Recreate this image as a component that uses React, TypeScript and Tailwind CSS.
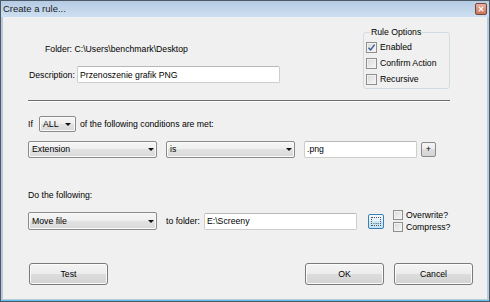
import React from 'react';

const Check: React.FC<{ checked?: boolean; size?: string }> = ({ checked, size = 'h-[11px] w-[11px]' }) => (
  <span
    className={`flex shrink-0 items-center justify-center border border-[#8e8f8f] bg-[linear-gradient(135deg,#d9d9d9,#f7f7f7)] shadow-[inset_0_0_0_1px_#f2f2f2] ${size}`}
  >
    {checked && (
      <svg width="9" height="9" viewBox="0 0 9 9">
        <path d="M1.5 4.8 L3.6 7 L7.6 1.6" fill="none" stroke="#3d5a98" strokeWidth="1.4" />
      </svg>
    )}
  </span>
);

const Combo: React.FC<{ label: string; className: string }> = ({ label, className }) => (
  <div
    className={`flex items-center justify-between rounded-[2px] border border-[#8a8a8a] bg-[linear-gradient(#f6f6f6_0%,#eeeeee_50%,#e2e2e2_50%,#d9d9d9_100%)] pl-[3px] pr-[2px] shadow-[inset_0_0_0_1px_#fafafa] ${className}`}
  >
    <span>{label}</span>
    <svg width="6" height="3" viewBox="0 0 6 3">
      <path d="M0 0h6L3 3z" fill="#111" />
    </svg>
  </div>
);

const Field: React.FC<{ value: string; className: string }> = ({ value, className }) => (
  <div
    className={`flex items-center rounded-[2px] border border-[#cdcdcd] border-t-[#b5b7bd] bg-white pl-[2px] ${className}`}
  >
    {value}
  </div>
);

const Button: React.FC<{ label: string }> = ({ label }) => (
  <div className="flex h-[22px] w-[79px] items-center justify-center rounded-[3px] border border-[#7a7a7a] bg-[linear-gradient(#f4f4f4_0%,#ececec_50%,#dddddd_50%,#d3d3d3_100%)] shadow-[inset_0_0_0_1px_#fbfbfb]">
    {label}
  </div>
);

export default function App() {
  return (
    <div className="flex h-[302px] w-[490px] flex-col border border-[#4b5866] bg-[#b9cadb] font-['Liberation_Sans',Arial,sans-serif] text-[8.7px] leading-[12px] text-black">
      {/* title bar */}
      <div className="flex h-[16px] shrink-0 items-center justify-between bg-[linear-gradient(#b5cbe3,#cde0f2)] pl-[2px] pr-[2px]">
        <span className="text-[9.5px] text-[#1b1b1b]">Create a rule...</span>
        <div className="flex h-[12px] w-[12px] items-center justify-center rounded-[2px] border border-[#7a4636] bg-[linear-gradient(#e6b3a2,#c8745b)]">
          <svg width="6" height="6" viewBox="0 0 6 6">
            <path d="M0.8 0.8 L5.2 5.2 M5.2 0.8 L0.8 5.2" stroke="#f6f0ee" strokeWidth="1.4" />
          </svg>
        </div>
      </div>

      {/* client */}
      <div className="mx-[2px] flex flex-1 flex-col bg-[#f0f0f0]">
        {/* top section */}
        <div className="flex h-[83px] pl-[25px] pr-[37px]">
          <div className="flex flex-1 flex-col">
            <div className="mt-[26px] h-[12px] pl-[17px]">Folder: C:\Users\benchmark\Desktop</div>
            <div className="mt-[11px] flex items-center">
              <span className="w-[49px] pl-[1px]">Description:</span>
              <Field value="Przenoszenie grafik PNG" className="h-[17px] w-[203px]" />
            </div>
          </div>
          <fieldset className="mt-[9px] h-[63px] w-[87px] rounded-[3px] border border-[#d3dbe2] pl-[2px]">
            <legend className="ml-[4px] px-[1px]">Rule Options</legend>
            <div className="mt-[1px] flex h-[16px] items-center gap-[3px]">
              <Check checked />
              <span>Enabled</span>
            </div>
            <div className="flex h-[16px] items-center gap-[3px]">
              <Check />
              <span>Confirm Action</span>
            </div>
            <div className="flex h-[16px] items-center gap-[3px]">
              <Check />
              <span>Recursive</span>
            </div>
          </fieldset>
        </div>

        {/* separator */}
        <div className="ml-[25px] h-[2px] w-[422px] border-t border-b border-t-[#6c6c6c] border-b-white" />

        {/* if row */}
        <div className="mt-[14px] flex h-[16px] items-center pl-[25px]">
          <span className="w-[11px]">If</span>
          <Combo label="ALL" className="h-[16px] w-[37px] pr-[4px]" />
          <span className="ml-[4px]">of the following conditions are met:</span>
        </div>

        {/* condition row */}
        <div className="mt-[8px] flex h-[18px] items-center pl-[25px]">
          <Combo label="Extension" className="h-[17px] w-[129px]" />
          <Combo label="is" className="ml-[9px] h-[17px] w-[129px]" />
          <Field value=".png" className="ml-[9px] h-[17px] w-[113px]" />
          <div className="ml-[4px] flex h-[15px] w-[15px] items-center justify-center rounded-[2px] border border-[#8a8a8a] bg-[linear-gradient(#f4f4f4_0%,#ececec_50%,#dddddd_50%,#d3d3d3_100%)] text-[9px] leading-none">
            +
          </div>
        </div>

        {/* do the following */}
        <div className="mt-[31px] h-[12px] pl-[25px]">Do the following:</div>

        {/* action row */}
        <div className="mt-[8px] flex h-[24px] items-center pl-[25px]">
          <Combo label="Move file" className="h-[18px] w-[129px]" />
          <span className="ml-[9px] w-[38px]">to folder:</span>
          <Field value="E:\Screeny" className="h-[17px] w-[153px]" />
          <div className="ml-[11px] flex h-[15px] w-[16px] items-center justify-center rounded-[2px] border border-[#3c7fb1] bg-[linear-gradient(#eef7fd_0%,#e2f1fb_50%,#cde8f8_50%,#c2e2f6_100%)] p-[2px]">
            <div className="flex h-full w-full items-end justify-center border border-dotted border-[#555] text-[8px] leading-[7px]">
              ...
            </div>
          </div>
          <div className="ml-[9px] flex flex-col">
            <div className="flex h-[12px] items-center gap-[3px]">
              <Check size="h-[10px] w-[10px]" />
              <span>Overwrite?</span>
            </div>
            <div className="flex h-[12px] items-center gap-[3px]">
              <Check size="h-[10px] w-[10px]" />
              <span>Compress?</span>
            </div>
          </div>
        </div>

        {/* buttons */}
        <div className="mt-[30px] flex items-center pl-[26px] pr-[14px]">
          <Button label="Test" />
          <div className="flex-1" />
          <Button label="OK" />
          <div className="w-[10px]" />
          <Button label="Cancel" />
        </div>
      </div>

      {/* bottom frame */}
      <div className="mx-[0px] h-[2px] shrink-0 bg-[linear-gradient(#b9cadb_50%,#5cc3ec_50%)]" />
    </div>
  );
}
